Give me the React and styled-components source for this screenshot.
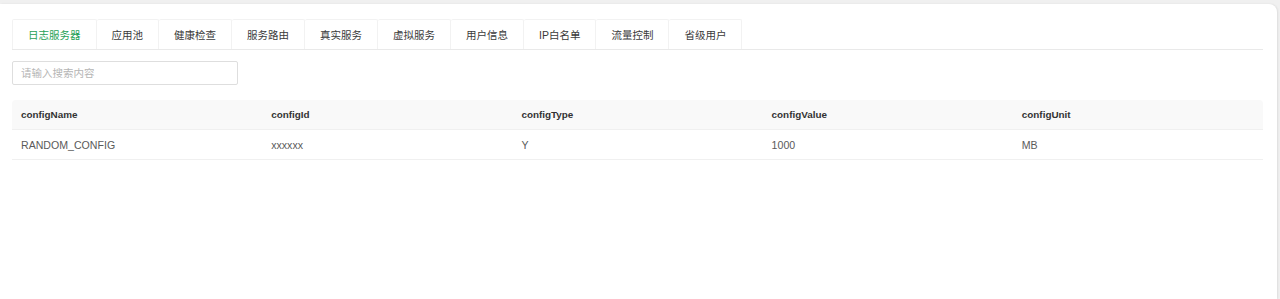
import React from "react";
import styled, { createGlobalStyle } from "styled-components";

const GlobalStyle = createGlobalStyle`
  html, body { margin: 0; padding: 0; }
  body {
    background: #f0f0f0;
    font-family: "Liberation Sans", Arial, "Noto Sans CJK SC", sans-serif;
    font-size: 10.7px;
  }
`;

const Page = styled.div`
  padding: 4px 3px 0 0;
  height: 295px;
  box-sizing: content-box;
`;

const Card = styled.div`
  background: #fff;
  border-radius: 0 8px 0 0;
  box-shadow: 1px 0 2px rgba(0, 0, 0, 0.08);
  height: 295px;
  padding: 15px 14px 0 12px;
  box-sizing: border-box;
`;

const TabBar = styled.div`
  display: flex;
  border-bottom: 1px solid #e9e9e9;
`;

const Tab = styled.div`
  height: 30px;
  box-sizing: border-box;
  padding: 0 15px;
  display: flex;
  align-items: center;
  border: 1px solid #f2f2f2;
  border-bottom: none;
  border-left-width: ${(p) => (p.$first ? "1px" : "0")};
  border-radius: 2px 2px 0 0;
  color: ${(p) => (p.$active ? "#1f9f57" : "#3a3a3a")};
  font-family: "Liberation Sans", "Noto Sans CJK SC", sans-serif;
  font-size: 10.5px;
  white-space: nowrap;
`;

const SearchInput = styled.input`
  display: block;
  margin-top: 11px;
  width: 226px;
  height: 24px;
  box-sizing: border-box;
  border: 1px solid #dedede;
  border-radius: 2px;
  padding: 0 8px;
  font-family: "Liberation Sans", "Noto Sans CJK SC", sans-serif;
  font-size: 10.5px;
  color: #333;
  outline: none;
  &::placeholder { color: #b5b5b5; }
`;

const Table = styled.div`
  margin-top: 15px;
  width: 100%;
`;

const Row = styled.div`
  display: grid;
  grid-template-columns: repeat(5, 1fr);
  height: 30px;
  align-items: center;
  background: ${(p) => (p.$head ? "#f9f9f9" : "#fff")};
  border-bottom: 1px solid #f0f0f0;
  border-radius: ${(p) => (p.$head ? "4px 4px 0 0" : "0")};
  box-sizing: border-box;
`;

const Cell = styled.div`
  padding-left: 9px;
  font-size: ${(p) => (p.$head ? "9.9px" : "10.6px")};
  color: ${(p) => (p.$head ? "#333" : "#5a5a5a")};
  font-weight: ${(p) => (p.$head ? 700 : 400)};
  white-space: nowrap;
`;

const tabs = ["日志服务器", "应用池", "健康检查", "服务路由", "真实服务", "虚拟服务", "用户信息", "IP白名单", "流量控制", "省级用户"];
const cols = ["configName", "configId", "configType", "configValue", "configUnit"];
const rows = [["RANDOM_CONFIG", "xxxxxx", "Y", "1000", "MB"]];

export default function App() {
  return (
    <>
      <GlobalStyle />
      <Page>
        <Card>
          <TabBar>
            {tabs.map((t, i) => (
              <Tab key={t} $first={i === 0} $active={i === 0}>{t}</Tab>
            ))}
          </TabBar>
          <SearchInput placeholder="请输入搜索内容" />
          <Table>
            <Row $head>
              {cols.map((c) => (
                <Cell key={c} $head>{c}</Cell>
              ))}
            </Row>
            {rows.map((r, i) => (
              <Row key={i}>
                {r.map((v, j) => (
                  <Cell key={j}>{v}</Cell>
                ))}
              </Row>
            ))}
          </Table>
        </Card>
      </Page>
    </>
  );
}
